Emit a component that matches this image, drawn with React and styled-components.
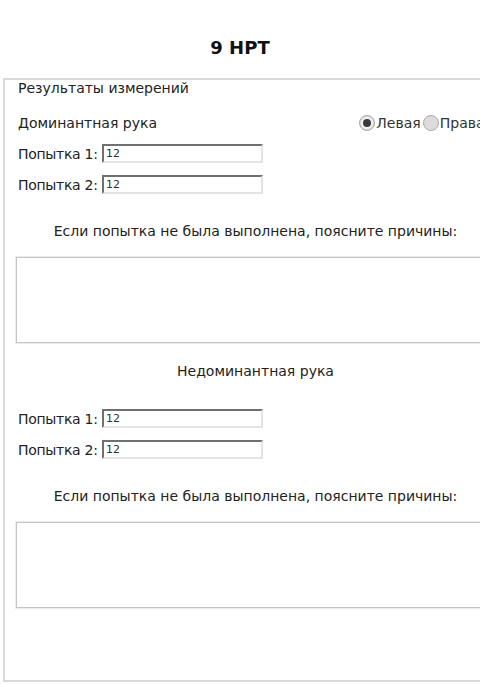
import React from 'react';
import styled, { createGlobalStyle } from 'styled-components';

const GlobalStyle = createGlobalStyle`
    html, body {
        margin: 0;
        padding: 0;
        overflow: hidden;
        background: #ffffff;
    }
    body {
        font-family: "DejaVu Sans", "Liberation Sans", sans-serif;
        color: #222;
    }
`;

const Title = styled.h1`
    margin: 0;
    height: 78px;
    display: flex;
    align-items: center;
    justify-content: center;
    padding-top: 16px;
    box-sizing: border-box;
    font-size: 18px;
    font-weight: bold;
    color: #111;
`;

const Panel = styled.div`
    margin-left: 3px;
    width: 502px;
    height: 604px;
    box-sizing: border-box;
    border: 2px solid #d9d9d9;
    padding: 0 10px 0 13px;
    display: flex;
    flex-direction: column;
    font-size: 14px;
`;

const Caption = styled.div`
    line-height: 16px;
`;

const HandRow = styled.div`
    display: flex;
    align-items: center;
    justify-content: space-between;
    height: 20px;
    margin-top: 17px;
`;

const RadioGroup = styled.div`
    display: flex;
    align-items: center;
    gap: 2px;
`;

const RadioLabel = styled.label`
    display: flex;
    align-items: center;
    gap: 1px;
    color: #333;
`;

const RadioDot = styled.span`
    width: 16px;
    height: 16px;
    box-sizing: border-box;
    border-radius: 50%;
    border: 1px solid #a8a8a8;
    background: #dcdcdc;
    display: flex;
    align-items: center;
    justify-content: center;
    &::after {
        content: '';
        display: ${p => (p.checked ? 'block' : 'none')};
        width: 8px;
        height: 8px;
        border-radius: 50%;
        background: #3a3a3a;
        box-shadow: 0 0 0 2px #f2f2f2;
    }
`;

const AttemptRow = styled.div`
    display: flex;
    align-items: center;
    height: 19px;
    margin-top: ${p => p.top}px;
`;

const AttemptLabel = styled.span`
    width: 84px;
    letter-spacing: -0.3px;
`;

const SmallInput = styled.div`
    width: 161px;
    height: 19px;
    box-sizing: border-box;
    border-top: 2px solid #707070;
    border-left: 2px solid #707070;
    border-right: 2px solid #e4e4e4;
    border-bottom: 2px solid #e4e4e4;
    font-size: 11px;
    line-height: 15px;
    padding-left: 2px;
    color: #333;
`;

const Prompt = styled.div`
    text-align: center;
    line-height: 16px;
    margin-top: ${p => p.top}px;
`;

const Notes = styled.div`
    height: 86px;
    box-sizing: border-box;
    border: 1px solid #c4c4c4;
    box-shadow: 0 0 0 1px #ececec;
    margin-top: 18px;
    margin-left: -2px;
`;

const Attempt = ({ label, value, top }) => (
    <AttemptRow top={top}>
        <AttemptLabel>{label}</AttemptLabel>
        <SmallInput>{value}</SmallInput>
    </AttemptRow>
);

export default function App() {
    return (
        <div>
            <GlobalStyle />
            <Title>9 HPT</Title>
            <Panel>
                <Caption>Результаты измерений</Caption>
                <HandRow>
                    <span>Доминантная рука</span>
                    <RadioGroup>
                        <RadioLabel><RadioDot checked />Левая</RadioLabel>
                        <RadioLabel><RadioDot />Правая</RadioLabel>
                    </RadioGroup>
                </HandRow>
                <Attempt label="Попытка 1:" value="12" top={11} />
                <Attempt label="Попытка 2:" value="12" top={12} />
                <Prompt top={29}>Если попытка не была выполнена, поясните причины:</Prompt>
                <Notes />
                <Prompt top={20}>Недоминантная рука</Prompt>
                <Attempt label="Попытка 1:" value="12" top={30} />
                <Attempt label="Попытка 2:" value="12" top={12} />
                <Prompt top={29}>Если попытка не была выполнена, поясните причины:</Prompt>
                <Notes />
            </Panel>
        </div>
    );
}
